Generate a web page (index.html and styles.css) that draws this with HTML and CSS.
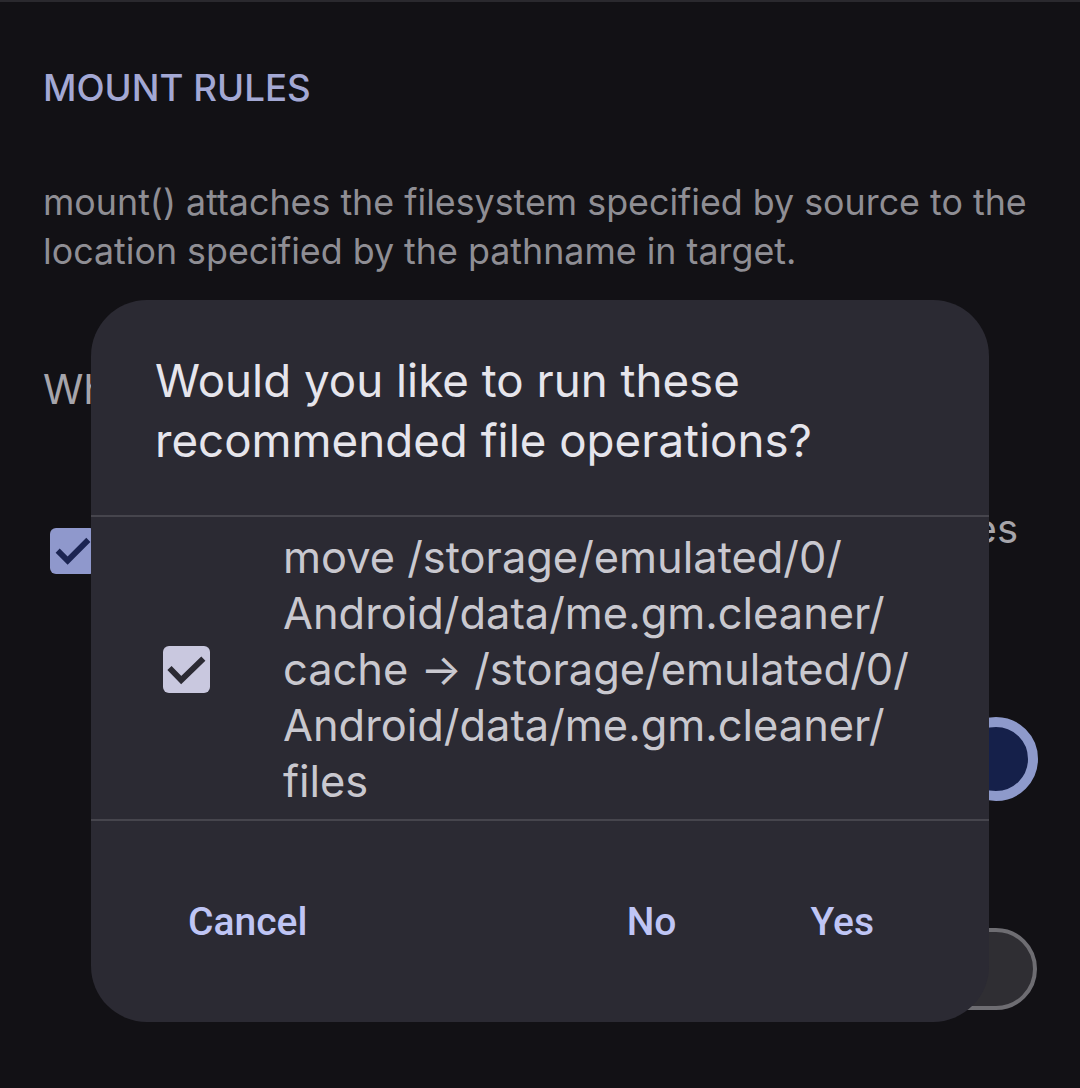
FILE: index.html
```html
<!DOCTYPE html>
<html lang="en">
<head>
<meta charset="utf-8">
<title>Mount rules</title>
<link rel="stylesheet" href="styles.css">
</head>
<body>
<div class="screen">
  <main class="page">
    <h2 class="section-title">MOUNT RULES</h2>
    <p class="section-desc">mount() attaches the filesystem specified by source to the location specified by the pathname in target.</p>
    <h3 class="rule-heading">When</h3>
    <div class="option-row">
      <span class="bg-check">
        <svg viewBox="0 0 24 24" width="46" height="46"><path d="M4 11.8l5.2 5.2 10.8-10.8" fill="none" stroke="#1b2452" stroke-width="3"/></svg>
      </span>
      <span class="option-label">Rules</span>
    </div>
    <div class="switch-row">
      <span class="thumb-on"></span>
    </div>
    <div class="switch-row switch-row-2">
      <span class="track-off"></span>
    </div>
  </main>

  <div class="dialog" role="dialog">
    <h1 class="dialog-title">Would you like to run these recommended file operations?</h1>
    <div class="divider"></div>
    <div class="op-item">
      <span class="op-check">
        <svg viewBox="0 0 24 24" width="47" height="47"><path d="M3.3 11.2l6 6.2 11.3-11" fill="none" stroke="#2b2a33" stroke-width="3"/></svg>
      </span>
      <span class="op-text">move /storage/emulated/0/<br>Android/data/me.gm.cleaner/<br>cache → /storage/emulated/0/<br>Android/data/me.gm.cleaner/<br>files</span>
    </div>
    <div class="divider"></div>
    <div class="actions">
      <button class="btn">Cancel</button>
      <span class="spacer"></span>
      <button class="btn">No</button>
      <button class="btn">Yes</button>
    </div>
  </div>
</div>
</body>
</html>
```
FILE: styles.css
```css
* { box-sizing: border-box; }
html, body {
  margin: 0;
  padding: 0;
  background: #121115;
}
body {
  font-family: Inter, "Noto Sans", sans-serif;
  width: 1080px;
  height: 1088px;
  overflow: hidden;
}
.screen {
  position: relative;
  width: 1080px;
  height: 1088px;
  border-top: 2px solid #2a292e;
}
.page {
  padding: 0 43px 0 43px;
}
.section-title {
  margin: 62px 0 0 0;
  font-size: 36.7px;
  line-height: 48px;
  font-weight: 500;
  color: #a3a8d4;
}
.section-desc {
  margin: 66px 0 0 0;
  font-size: 35.8px;
  line-height: 49px;
  color: #8f8e94;
  font-weight: 400;
}
.rule-heading {
  margin: 86px 0 0 0;
  font-size: 41px;
  line-height: 54px;
  font-weight: 400;
  color: #a6a5ab;
}
.option-row {
  display: flex;
  align-items: flex-start;
  justify-content: space-between;
  margin-top: 102px;
}
.bg-check {
  width: 46px;
  height: 46px;
  margin: 10px 0 0 7px;
  border-radius: 6px;
  background: #8f98cc;
  display: flex;
}
.option-label {
  font-size: 40px;
  line-height: 40px;
  color: #a6a5ab;
  margin-right: 19px;
  margin-top: -9px;
}
.switch-row {
  display: flex;
  justify-content: flex-end;
  align-items: center;
  margin-top: 143px;
}
.switch-row-2 { margin-top: 127px; }
.thumb-on {
  width: 84px;
  height: 84px;
  border-radius: 50%;
  background: #15204a;
  border: 10px solid #8e9acb;
  margin-right: -1px;
}
.track-off {
  width: 140px;
  height: 82px;
  border-radius: 41px;
  background: #2f2e33;
  border: 4px solid #6e6d72;
}

.dialog {
  position: absolute;
  left: 91px;
  top: 298px;
  width: 898px;
  height: 722px;
  border-radius: 56px;
  background: #2b2a33;
  display: flex;
  flex-direction: column;
}
.dialog-title {
  margin: 0;
  padding: 51px 60px 0 64px;
  font-size: 45.7px;
  line-height: 60px;
  font-weight: 400;
  color: #e6e5ec;
}
.divider {
  height: 2px;
  background: #46454d;
}
.dialog-title + .divider { margin-top: 44px; }
.op-item {
  display: flex;
  align-items: center;
  padding: 12px 0 10px 72px;
}
.op-check {
  width: 47px;
  height: 47px;
  border-radius: 6px;
  background: #c9c8df;
  display: flex;
  flex: none;
}
.op-text {
  margin-left: 73px;
  font-size: 43.4px;
  line-height: 56px;
  color: #c9c8cf;
  white-space: nowrap;
}
.actions {
  display: flex;
  align-items: center;
  padding: 0 91px 0 73px;
  flex: 1;
}
.spacer { flex: 1; }
.btn {
  background: none;
  border: none;
  font-family: Roboto, "Noto Sans", sans-serif;
  font-size: 39px;
  font-weight: 500;
  color: #bfc5f5;
  padding: 12px 24px;
  margin: 0;
}
.btn + .btn { margin-left: 86px; }
```
